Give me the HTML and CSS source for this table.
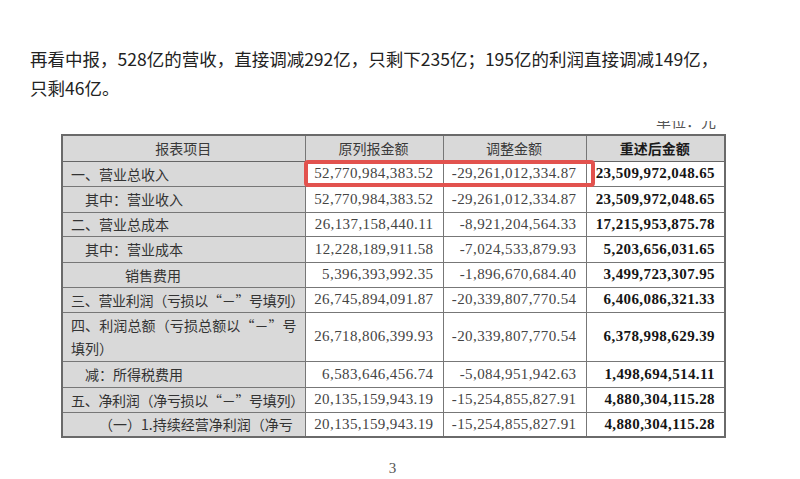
FILE: index.html
```html
<!DOCTYPE html>
<html lang="zh-CN">
<head>
<meta charset="utf-8">
<title>中报调整</title>
<link rel="stylesheet" href="styles.css">
</head>
<body>
<div class="article">
  <p class="lead">再看中报，528亿的营收，直接调减292亿，只剩下235亿；195亿的利润直接调减149亿，<br>只剩46亿。</p>
  <div class="figure">
    <div class="unit-clip"><div class="unit">单位：元</div></div>
    <table class="report">
      <colgroup>
        <col class="c-item"><col class="c-orig"><col class="c-adj"><col class="c-rest">
      </colgroup>
      <thead>
        <tr><th>报表项目</th><th>原列报金额</th><th>调整金额</th><th class="strong">重述后金额</th></tr>
      </thead>
      <tbody>
        <tr class="r25"><td class="item">一、营业总收入</td><td>52,770,984,383.52</td><td>-29,261,012,334.87</td><td class="strong">23,509,972,048.65</td></tr>
        <tr class="r26"><td class="item ind1">其中：营业收入</td><td>52,770,984,383.52</td><td>-29,261,012,334.87</td><td class="strong">23,509,972,048.65</td></tr>
        <tr class="r24"><td class="item">二、营业总成本</td><td>26,137,158,440.11</td><td>-8,921,204,564.33</td><td class="strong">17,215,953,875.78</td></tr>
        <tr class="r26"><td class="item ind1">其中：营业成本</td><td>12,228,189,911.58</td><td>-7,024,533,879.93</td><td class="strong">5,203,656,031.65</td></tr>
        <tr class="r25"><td class="item ind4">销售费用</td><td>5,396,393,992.35</td><td>-1,896,670,684.40</td><td class="strong">3,499,723,307.95</td></tr>
        <tr class="r25"><td class="item tight">三、营业利润（亏损以“－”号填列）</td><td>26,745,894,091.87</td><td>-20,339,807,770.54</td><td class="strong">6,406,086,321.33</td></tr>
        <tr class="r50"><td class="item two">四、利润总额（亏损总额以“－”号填列）</td><td>26,718,806,399.93</td><td>-20,339,807,770.54</td><td class="strong">6,378,998,629.39</td></tr>
        <tr class="r26"><td class="item ind1">减：所得税费用</td><td>6,583,646,456.74</td><td>-5,084,951,942.63</td><td class="strong">1,498,694,514.11</td></tr>
        <tr class="r25"><td class="item tight">五、净利润（净亏损以“－”号填列）</td><td>20,135,159,943.19</td><td>-15,254,855,827.91</td><td class="strong">4,880,304,115.28</td></tr>
        <tr class="r25"><td class="item ind2">（一）1.持续经营净利润（净亏</td><td>20,135,159,943.19</td><td>-15,254,855,827.91</td><td class="strong">4,880,304,115.28</td></tr>
      </tbody>
    </table>
    <div class="highlight"></div>
    <div class="page-num">3</div>
  </div>
</div>
</body>
</html>
```

FILE: styles.css
```css
* { box-sizing: border-box; }
html, body { margin: 0; padding: 0; background: #fff; }
body {
  width: 800px;
  height: 479px;
  overflow: hidden;
  font-family: "Noto Sans CJK SC", "Noto Sans", sans-serif;
  color: #1f1f1f;
}
.article {
  padding: 0 30px;
}
.lead {
  margin: 44px 0 0 0;
  font-size: 17.5px;
  line-height: 29px;
  color: #222;
  white-space: nowrap;
}
.figure {
  position: relative;
  margin: 19px 0 0 31px;
  width: 663px;
}
.unit-clip {
  height: 13px;
  overflow: hidden;
}
.unit {
  margin-top: -8px;
  padding-right: 8px;
  text-align: right;
  font-size: 15px;
  line-height: 16px;
  color: #555;
}
.report {
  width: 663px;
  table-layout: fixed;
  border-collapse: collapse;
  border: 2px solid #6a6a6a;
  font-size: 14px;
  color: #333;
}
.c-item { width: 243px; }
.c-orig { width: 138px; }
.c-adj { width: 143px; }
.c-rest { width: 139px; }
.report th, .report td {
  border: 1px solid #777;
  padding: 0 9px 0 8px;
  white-space: nowrap;
}
.report th {
  height: 26px;
  background: #d9d9d9;
  font-weight: normal;
  text-align: center;
  font-family: "Noto Sans CJK SC", sans-serif;
  color: #3a3a3a;
  border-bottom: 1px solid #666;
}
.report th.strong { font-weight: 700; color: #1a1a1a; }
.report td {
  text-align: right;
  font-family: "Liberation Serif", "Noto Sans CJK SC", serif;
  font-size: 15px;
  letter-spacing: 0.4px;
  color: #444;
}
.report td.strong { font-weight: 700; color: #151515; }
.report td.item {
  background: #d9d9d9;
  text-align: left;
  font-family: "Noto Sans CJK SC", sans-serif;
  font-size: 14px;
  letter-spacing: 0;
  color: #333;
  padding-right: 2px;
}
.report td.tight { letter-spacing: -0.3px; }
.report td.ind1 { padding-left: 22px; }
.report td.ind2 { padding-left: 36px; }
.report td.ind4 { padding-left: 62px; }
.report td.two {
  white-space: normal;
  text-align: justify;
  line-height: 23px;
  padding-right: 8px;
}
.r24 td { height: 24px; }
.r25 td { height: 25px; }
.r26 td { height: 26px; }
.r50 td { height: 49px; }
.highlight {
  position: absolute;
  left: 243px;
  top: 39px;
  width: 291px;
  height: 27px;
  border: 4px solid #e2524e;
  border-radius: 4px;
}
.page-num {
  margin-top: 22px;
  text-align: center;
  font-family: "Liberation Serif", serif;
  font-size: 15px;
  line-height: 16px;
  color: #555;
}
```
